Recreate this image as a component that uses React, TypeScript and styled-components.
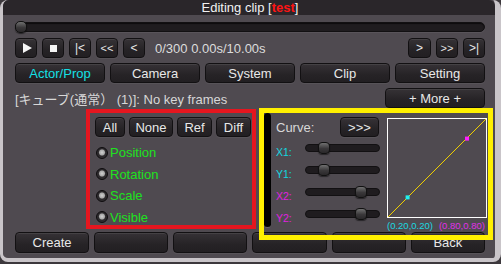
import React from "react";
import styled, { createGlobalStyle } from "styled-components";

const Global = createGlobalStyle`
  html, body { margin: 0; padding: 0; background: #3c383c; }
  body { font-family: "Liberation Sans", "Noto Sans CJK JP", sans-serif; }
  * { box-sizing: border-box; }
`;

const Window = styled.div`
  width: 501px;
  height: 262px;
  background: #4f4a50;
  border-style: solid;
  border-color: #c9c5c9;
  border-width: 0 6px 4px 3px;
  border-radius: 8px;
  display: flex;
  flex-direction: column;
  color: #e6e6e6;
  font-size: 13px;
`;

const TitleBar = styled.div`
  height: 15px;
  line-height: 15px;
  background: #2a262a;
  text-align: center;
  color: #f2f2f2;
  font-size: 13px;
  border-radius: 6px 6px 0 0;
  padding-left: 2px;
`;

const Red = styled.span`
  color: #ff1414;
  font-weight: bold;
`;

const Content = styled.div`
  flex: 1;
  display: flex;
  flex-direction: column;
  padding: 0 10px 0 12px;
`;

const SeekRow = styled.div`
  margin-top: 6px;
  height: 12px;
  position: relative;
  display: flex;
  align-items: center;
`;

const SeekTrack = styled.div`
  flex: 1;
  height: 10px;
  background: #1f1c1f;
  border: 1px solid #121012;
  border-radius: 5px;
  box-shadow: inset 0 1px 1px rgba(0, 0, 0, 0.6), 0 1px 0 rgba(255, 255, 255, 0.06);
`;

const Knob = styled.div`
  position: absolute;
  width: 12px;
  height: 12px;
  border-radius: 5px;
  border: 1px solid #111;
  background: linear-gradient(#707070, #3a383a 55%, #2a282a);
  box-shadow: 0 1px 1px rgba(0, 0, 0, 0.5);
`;

const Row = styled.div<{ $top: number; $h?: number }>`
  margin-top: ${(p) => p.$top}px;
  height: ${(p) => p.$h ?? 20}px;
  display: flex;
  align-items: center;
  gap: 5px;
`;

const Btn = styled.div<{ $w?: number; $active?: boolean; $fs?: number }>`
  width: ${(p) => (p.$w ? `${p.$w}px` : "auto")};
  height: 100%;
  flex-shrink: 0;
  display: flex;
  align-items: center;
  justify-content: center;
  background: linear-gradient(#363236, #262326 60%, #221f22);
  border: 1px solid #121012;
  border-radius: 4px;
  box-shadow: inset 0 1px 0 rgba(255, 255, 255, 0.08), 0 1px 0 rgba(255, 255, 255, 0.05);
  color: ${(p) => (p.$active ? "#14e0e6" : "#e8e8e8")};
  font-size: ${(p) => p.$fs ?? 13}px;
  white-space: nowrap;
`;

const TimeText = styled.span`
  margin-left: 5px;
  color: #dcdcdc;
  flex: 1;
`;

const Grid = styled.div<{ $cols: number; $top: number; $h: number }>`
  margin-top: ${(p) => p.$top}px;
  height: ${(p) => p.$h}px;
  display: grid;
  grid-template-columns: repeat(${(p) => p.$cols}, 1fr);
  gap: 5px;
`;

const InfoText = styled.span`
  flex: 1;
  color: #d8d8d8;
`;

const PanelsRow = styled.div`
  height: 124px;
  display: flex;
  align-items: flex-start;
  padding-left: 71px;
`;

const RedBox = styled.div`
  flex-shrink: 0;
  margin-top: 1px;
  width: 170px;
  height: 120px;
  border: 4px solid #e5161f;
  padding: 4px 0 0 5px;
`;

const FilterRow = styled.div`
  height: 20px;
  display: flex;
  gap: 4px;
`;

const RadioList = styled.div`
  margin-top: 5px;
  display: flex;
  flex-direction: column;
`;

const RadioRow = styled.div`
  height: 21.5px;
  display: flex;
  align-items: center;
  padding-left: 1px;
  color: #1ee21e;
`;

const RadioDot = styled.span`
  width: 12px;
  height: 12px;
  border-radius: 50%;
  border: 1px solid #0e0c0e;
  background: radial-gradient(circle at 50% 45%, #d0d0d0 0, #a8a8a8 2.5px, #2c292c 3.6px, #343134 100%);
  margin-right: 2px;
  flex-shrink: 0;
`;

const YellowBox = styled.div`
  flex-shrink: 0;
  position: relative;
  z-index: 2;
  margin-left: 3px;
  width: 234px;
  height: 132px;
  border: 5px solid #fff000;
  display: flex;
  align-items: flex-start;
`;

const EdgeBar = styled.div`
  flex-shrink: 0;
  width: 7px;
  height: 115px;
  background: #000;
  border-radius: 4px;
  border-bottom: 1px solid #6a666a;
`;

const CurveCol = styled.div`
  flex-shrink: 0;
  margin-left: 5px;
  padding-top: 4px;
  width: 104px;
  display: flex;
  flex-direction: column;
`;

const CurveHead = styled.div`
  height: 20px;
  display: flex;
  align-items: center;
  justify-content: space-between;
  padding-right: 1px;
  color: #d8d8d8;
`;

const SliderRow = styled.div`
  height: 22px;
  display: flex;
  align-items: center;
`;

const AxisLabel = styled.span<{ $c: string }>`
  width: 29px;
  padding-top: 7px;
  font-size: 10.5px;
  color: ${(p) => p.$c};
`;

const SliderTrack = styled.div`
  position: relative;
  width: 75px;
  height: 8px;
  border-radius: 4px;
  background: #1f1c1f;
  border: 1px solid #121012;
  display: flex;
  align-items: center;
`;

const SliderKnob = styled(Knob)`
  width: 12px;
  height: 12px;
  border-radius: 4px;
`;

const GraphCol = styled.div`
  flex-shrink: 0;
  margin-left: 7px;
  padding-top: 5px;
  width: 100px;
  display: flex;
  flex-direction: column;
`;

const GraphBox = styled.div`
  width: 100px;
  height: 100px;
  border: 1px solid #ffffff;
`;

const PointLabels = styled.div`
  margin-top: 1px;
  display: flex;
  gap: 6px;
  font-size: 9.5px;
  height: 12px;
  align-items: center;
  white-space: nowrap;
`;

const PLabel = styled.span<{ $c: string }>`
  color: ${(p) => p.$c};
`;

const Tri = styled.span`
  width: 0;
  height: 0;
  border-top: 5px solid transparent;
  border-bottom: 5px solid transparent;
  border-left: 9px solid #f4f4f4;
  margin-left: 2px;
`;

const Square = styled.span`
  width: 7px;
  height: 7px;
  background: #f4f4f4;
`;

const sliders = [
  { label: "X1:", c: "#12d8e0", v: 0.2 },
  { label: "Y1:", c: "#12d8e0", v: 0.19 },
  { label: "X2:", c: "#e020e0", v: 0.8 },
  { label: "Y2:", c: "#e020e0", v: 0.8 },
];

export default function App() {
  return (
    <>
      <Global />
      <Window>
        <TitleBar>
          Editing clip [<Red>test</Red>]
        </TitleBar>
        <Content>
          <SeekRow>
            <SeekTrack />
            <Knob style={{ left: 0 }} />
          </SeekRow>
          <Row $top={5}>
            <Btn $w={22}><Tri /></Btn>
            <Btn $w={22}><Square /></Btn>
            <Btn $w={22} $fs={12}>|&lt;</Btn>
            <Btn $w={22} $fs={11}>&lt;&lt;</Btn>
            <Btn $w={22} $fs={12}>&lt;</Btn>
            <TimeText>0/300 0.00s/10.00s</TimeText>
            <Btn $w={23} $fs={12}>&gt;</Btn>
            <Btn $w={22} $fs={11}>&gt;&gt;</Btn>
            <Btn $w={22} $fs={12}>&gt;|</Btn>
          </Row>
          <Grid $cols={5} $top={5} $h={20}>
            <Btn $active>Actor/Prop</Btn>
            <Btn>Camera</Btn>
            <Btn>System</Btn>
            <Btn>Clip</Btn>
            <Btn>Setting</Btn>
          </Grid>
          <Row $top={5}>
            <InfoText>[キューブ(通常） (1)]: No key frames</InfoText>
            <Btn $w={100}>+ More +</Btn>
          </Row>
          <PanelsRow>
            <RedBox>
              <FilterRow>
                <Btn $w={30}>All</Btn>
                <Btn $w={44}>None</Btn>
                <Btn $w={35}>Ref</Btn>
                <Btn $w={35}>Diff</Btn>
              </FilterRow>
              <RadioList>
                {["Position", "Rotation", "Scale", "Visible"].map((t) => (
                  <RadioRow key={t}>
                    <RadioDot />
                    {t}
                  </RadioRow>
                ))}
              </RadioList>
            </RedBox>
            <YellowBox>
              <EdgeBar />
              <CurveCol>
                <CurveHead>
                  <span>Curve:</span>
                  <Btn $w={39}>&gt;&gt;&gt;</Btn>
                </CurveHead>
                {sliders.map((s) => (
                  <SliderRow key={s.label}>
                    <AxisLabel $c={s.c}>{s.label}</AxisLabel>
                    <SliderTrack>
                      <SliderKnob style={{ left: `${s.v * 61}px` }} />
                    </SliderTrack>
                  </SliderRow>
                ))}
              </CurveCol>
              <GraphCol>
                <GraphBox>
                  <svg width="98" height="98" viewBox="0 0 98 98" style={{ display: "block" }}>
                    <line x1="0" y1="98" x2="98" y2="0" stroke="#f0d000" strokeWidth="1" />
                    <rect x="77" y="17.6" width="4" height="4" fill="#ff20ff" />
                    <rect x="17.6" y="76.4" width="4" height="4" fill="#20f0f0" />
                  </svg>
                </GraphBox>
                <PointLabels>
                  <PLabel $c="#1ad8e0">(0.20,0.20)</PLabel>
                  <PLabel $c="#e030e8">(0.80,0.80)</PLabel>
                </PointLabels>
              </GraphCol>
            </YellowBox>
          </PanelsRow>
          <Grid $cols={6} $top={0} $h={21}>
            <Btn>Create</Btn>
            <Btn />
            <Btn />
            <Btn />
            <Btn />
            <Btn>Back</Btn>
          </Grid>
        </Content>
      </Window>
    </>
  );
}
